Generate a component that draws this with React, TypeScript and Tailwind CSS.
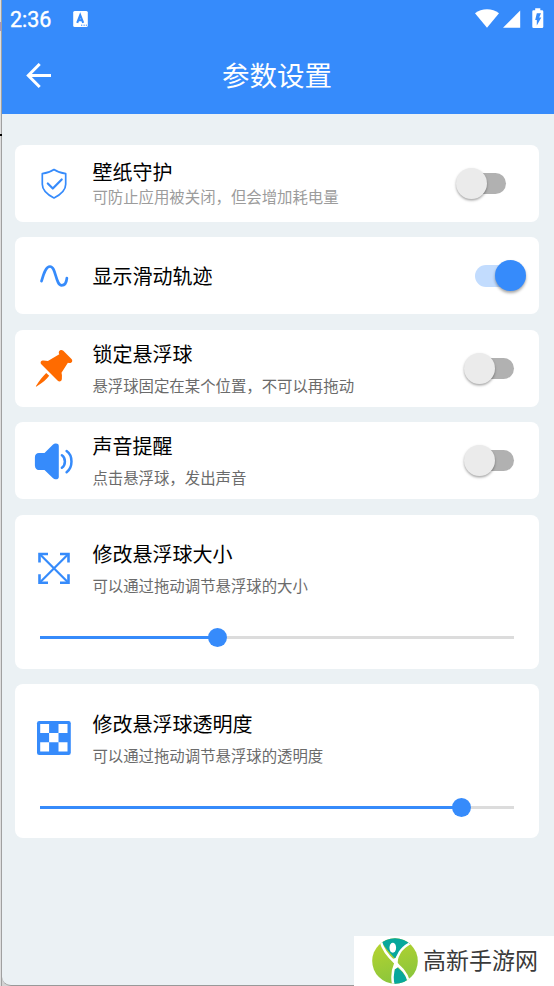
import type { ReactNode } from 'react';

const BLUE = '#368bfb';

function ShieldIcon() {
  return (
    <svg width="40" height="40" viewBox="0 0 40 40" fill="none" stroke={BLUE} strokeWidth="1.700" strokeLinejoin="round" strokeLinecap="round">
      <path d="M20 5.500c3.200 2.300 7.200 3.700 11.700 4.200v10.500c0 6-5.500 10.600-11.700 13.700C13.800 30.800 8.300 26.200 8.300 20.200V9.700C12.800 9.200 16.800 7.800 20 5.500z" />
      <path d="M13.800 19.500l5 5 8.900-9" strokeWidth="2.200" />
    </svg>
  );
}

function WaveIcon() {
  return (
    <svg width="40" height="40" viewBox="0 0 40 40" fill="none" stroke={BLUE} strokeWidth="2.700" strokeLinecap="round">
      <path d="M7.500 25.200C9.800 17 12 10.500 16 10.500c6.200 0 5.400 18.900 11.700 18.900 3.200 0 4.800-3.200 5.200-7.400" />
    </svg>
  );
}

function PinIcon() {
  return (
    <svg width="40" height="40" viewBox="0 0 40 40" fill="#ff6b00">
      <path d="M25 3.400c.9-1.800 2.900-2 4.300-.6l8.200 8.300c1.300 1.400.9 3.300-.9 3.900-.9.200-1.800 0-2.700-.3l-6.400 10.100c.5 1.600.6 3.200.4 5 .1 1.600-.2 2.800-1 3.300-1.100.8-2.400.4-3.400-.6L7.300 16.300c-1.300-1.500-.7-3.500 1.200-3.900 1.900-.1 3.700.1 5.400.7L25.300 6.200c-.5-.9-.7-1.900-.3-2.800z" />
      <path d="M12.200 24.900l3 2.900c-2.900 3.800-6.700 7.100-12.700 10.800-.5.300-.8 0-.5-.5 3.200-5.900 6.800-9.800 10.200-13.200z" />
    </svg>
  );
}

function SoundIcon() {
  return (
    <svg width="40" height="40" viewBox="0 0 40 40" fill="none">
      <path d="M5 12h5.500l8.300-8.200c1.700-1.700 6-1.900 6 1.100v31c0 3-4.300 2.800-6 1.100l-8.300-7.900H6c-3.200 0-5.100-1.600-5.100-4.700v-7.900c0-2.900 1.500-4.500 4.100-4.500z" fill={BLUE} />
      <path d="M27.900 14.300c4 2.600 4 9.700 0 12.400M32.600 10c6.500 4.500 6.500 16.300 0 21.200" stroke={BLUE} strokeWidth="2.500" strokeLinecap="round" />
    </svg>
  );
}

function ResizeIcon() {
  return (
    <svg width="40" height="40" viewBox="0 0 40 40" fill="none" stroke={BLUE} strokeWidth="2.200">
      <path d="M5.600 6l28.800 28.800M34.400 6L5.600 34.800" />
      <path d="M5.500 14.500V6H14M26 6h8.500v8.500M5.500 26.300v8.500H14M26 34.800h8.500v-8.500" strokeWidth="2.600" />
    </svg>
  );
}

function CheckerIcon() {
  return (
    <svg width="40" height="40" viewBox="0 0 40 40">
      <rect x="3" y="3" width="33.800" height="34" rx="2.200" fill={BLUE} />
      <path d="M6.200 6h8.900v9H6.200zM24.500 6h9v9h-9zM15.100 15h9.400v9.300h-9.400zM6.200 24.300h8.900v9.300H6.200zM24.500 24.300h9v9.300h-9z" fill="white" />
    </svg>
  );
}

function Switch({ on = false }: { on?: boolean }) {
  return (
    <div className={`flex h-[31px] w-[62px] shrink-0 items-center ${on ? 'justify-end' : 'justify-start'}`}>
      {on ? (
        <>
          <div className="h-[21.5px] w-[46px] rounded-full bg-[#c2dcfe]" />
          <div className="-ml-[26.500px] size-[31px] rounded-full bg-[#368bfb] shadow-[0_2px_3px_rgba(0,0,0,0.35)]" />
        </>
      ) : (
        <>
          <div className="z-10 size-[31px] rounded-full bg-[#ebebeb] shadow-[0_1.5px_2.5px_rgba(0,0,0,0.35)]" />
          <div className="-ml-[26.500px] h-[21.5px] w-[46px] rounded-full bg-[#b1b1b1]" />
        </>
      )}
    </div>
  );
}

function Slider({ value }: { value: number }) {
  return (
    <div className="mx-[25px] flex h-[19px] items-center">
      <div className="h-[3px] bg-[#368bfb]" style={{ width: `${value}%` }} />
      <div className="z-10 -mx-[9.500px] size-[19px] shrink-0 rounded-full bg-[#368bfb]" />
      <div className="h-[3px] flex-1 bg-[#dcdcdc]" />
    </div>
  );
}

type RowProps = {
  icon: ReactNode;
  title: string;
  note?: string;
  compact?: boolean;
  control?: ReactNode;
};

function Row({ icon, title, note, compact, control }: RowProps) {
  const offset = !note || compact ? 'pt-[2px]' : 'pt-[5px]';
  return (
    <div className="flex h-[77px] items-center">
      <div className="ml-[18.500px] mr-[18.500px] size-10 shrink-0">{icon}</div>
      <div className={`flex-1 whitespace-nowrap ${offset}`}>
        <div className="text-[20px] leading-[26px] text-black">{title}</div>
        {note && (
          <div className={compact ? 'text-[15.4px] leading-[24px] text-[#9c9c9c]' : 'mt-[6px] text-[15.4px] leading-[26px] text-[#6b6b6b]'}>
            {note}
          </div>
        )}
      </div>
      {control}
    </div>
  );
}

function Card({ children, className = '' }: { children: ReactNode; className?: string }) {
  return <section className={`rounded-[8px] bg-white ${className}`}>{children}</section>;
}

function StatusBar() {
  return (
    <div className="flex h-[38px] items-center pl-[8px] pr-[10px] text-white">
      <span className="w-[43px] pt-[2px] font-[Roboto] text-[21.500px] leading-[38px] [-webkit-text-stroke:0.4px_white]">2:36</span>
      <svg className="ml-[20px]" width="15" height="17" viewBox="0 0 15 17">
        <rect x="0.200" y="0" width="14.600" height="16" rx="1.500" fill="white" />
        <path d="M4.200 11.800L7.200 4.200 10.200 11.800M5.300 9.300h4" fill="none" stroke={BLUE} strokeWidth="2.100" />
        <path d="M8 14.200h1.300M10.500 14.200h1.300M12.800 14.200h1.200" stroke={BLUE} />
      </svg>
      <svg className="ml-auto" width="24" height="20" viewBox="0 0 24 20" fill="white">
        <path d="M0 4.300C6.500-1 17.500-1 24 4.300L12 18.700z" />
      </svg>
      <svg className="ml-[4px]" width="18" height="20" viewBox="0 0 18 20" fill="white">
        <path d="M17.200 1.500v17.300H0z" />
      </svg>
      <svg className="ml-[11px]" width="12" height="22" viewBox="0 0 12 22">
        <path d="M3.200.2h5.100v2H10q1.300 0 1.300 1.300v15.200q0 1.400-1.300 1.400H1.600Q.3 20.100.3 18.700V3.500Q.3 2.200 1.600 2.200h1.600z" fill="white" />
        <path d="M4.800 5.200h4.200L7.200 9.400h2.100l-4.500 8.100v-5.600H3.200z" fill={BLUE} />
      </svg>
    </div>
  );
}

function SiteLogo() {
  return (
    <svg width="48" height="48" viewBox="0 0 48 48">
      <defs>
        <linearGradient id="leaf" x1="0" y1="0" x2="0.300" y2="1">
          <stop offset="0" stopColor="#bdd52d" />
          <stop offset="1" stopColor="#8bc63c" />
        </linearGradient>
        <clipPath id="disc"><circle cx="24" cy="24" r="22.800" /></clipPath>
      </defs>
      <g clipPath="url(#disc)">
        <rect width="48" height="48" fill="url(#leaf)" />
        <path d="M9 0h31v6Q29 13 24 21.500 16 13 11 6z" fill="#07a79c" />
        <path d="M25.500 30Q34 36 36 43l-5 5h-8Q20 37 25.500 30z" fill="#07a79c" />
        <path d="M10 5c2 9 8 15 14 20.500 6 5.500 11.500 10 13.500 18" fill="none" stroke="white" strokeWidth="2.500" />
        <path d="M38.500 6.500C29 12 26.500 18 24.500 26 21.500 33 20.500 40 22.500 48" fill="none" stroke="white" strokeWidth="2.500" />
        <path d="M20.800 22q3.200.5 6.200-3l-.3 6.500 1.800 3.500-4 3-1.800-1 .5-4.500z" fill="white" />
        <ellipse cx="21.800" cy="10.800" rx="3.300" ry="5" fill="white" />
      </g>
    </svg>
  );
}

export default function App() {
  return (
    <div className="relative flex h-[986px] w-[554px] overflow-hidden bg-[#d3d3d3] font-['Liberation_Sans','Noto_Sans_CJK_SC',sans-serif]">
      <div className="flex w-[2px] shrink-0 flex-col border-r border-[#a0a0a0] bg-[#dedede]">
        <div className="mt-[22px] h-[9px] bg-[#a897c4]" />
        <div className="mt-[103px] h-[2px] w-[2px] bg-black" />
      </div>
      <main className="flex h-[986px] flex-1 flex-col rounded-bl-[9px] border-b border-[#999] bg-[#ebf1f4]">
        <header className="h-[114px] bg-[#368bfb]">
          <StatusBar />
          <div className="flex h-[76px] items-center pl-6 text-white">
            <svg width="26" height="26" viewBox="0 0 26 26" fill="none" stroke="white" strokeWidth="3">
              <path d="M25 12.500H2.500M13.700 1L2.300 12.500l11.400 11.500" />
            </svg>
            <h1 className="ml-[170px] pt-px text-[27.500px] leading-[40px]">参数设置</h1>
          </div>
        </header>
        <div className="flex flex-col gap-[15.400px] pl-[13.400px] pr-[15.400px] pt-[31px]">
          <Card>
            <Row icon={<ShieldIcon />} title="壁纸守护" note="可防止应用被关闭，但会增加耗电量" compact control={<div className="mr-[21px]"><Switch /></div>} />
          </Card>
          <Card>
            <Row icon={<WaveIcon />} title="显示滑动轨迹" control={<div className="mr-[13px]"><Switch on /></div>} />
          </Card>
          <Card>
            <Row icon={<PinIcon />} title="锁定悬浮球" note="悬浮球固定在某个位置，不可以再拖动" control={<div className="mr-[13px]"><Switch /></div>} />
          </Card>
          <Card>
            <Row icon={<SoundIcon />} title="声音提醒" note="点击悬浮球，发出声音" control={<div className="mr-[13px]"><Switch /></div>} />
          </Card>
          <Card className="h-[154px] pt-[15.400px]">
            <Row icon={<ResizeIcon />} title="修改悬浮球大小" note="可以通过拖动调节悬浮球的大小" />
            <div className="mt-[21px]"><Slider value={37.5} /></div>
          </Card>
          <Card className="h-[154px] pt-[16px]">
            <Row icon={<CheckerIcon />} title="修改悬浮球透明度" note="可以通过拖动调节悬浮球的透明度" />
            <div className="mt-[21px]"><Slider value={89} /></div>
          </Card>
        </div>
      </main>
      <div className="absolute bottom-0 right-0 flex h-[50px] w-[200px] items-center bg-white pl-[17px]">
        <SiteLogo />
        <span className="ml-[4px] whitespace-nowrap text-[23px] leading-[34px] text-[#3a3a3a]">高新手游网</span>
      </div>
    </div>
  );
}
